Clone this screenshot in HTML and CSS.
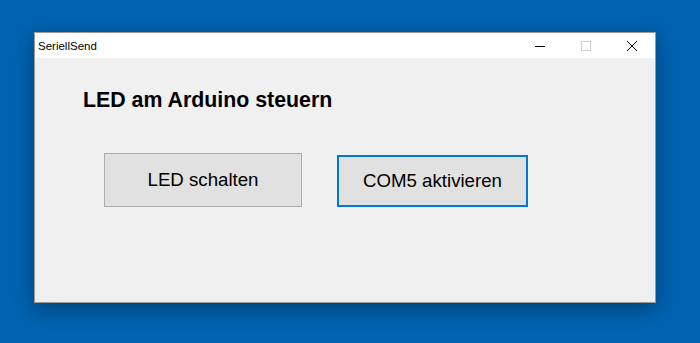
FILE: index.html
```html
<!DOCTYPE html>
<html lang="de">
<head>
    <meta charset="UTF-8">
    <title>SeriellSend</title>
    <link rel="stylesheet" href="styles.css">
</head>
<body>
    <div class="window">
        <div class="titlebar">
            <span class="title">SeriellSend</span>
            <div class="controls">
                <div class="ctrl">
                    <svg width="10" height="10" viewBox="0 0 10 10"><path d="M0 5.5H10" stroke="#000" stroke-width="1"/></svg>
                </div>
                <div class="ctrl">
                    <svg width="10" height="10" viewBox="0 0 10 10"><rect x="0.5" y="0.5" width="9" height="9" fill="none" stroke="#cccccc" stroke-width="1"/></svg>
                </div>
                <div class="ctrl">
                    <svg width="10" height="10" viewBox="0 0 10 10"><path d="M0 0L10 10M10 0L0 10" stroke="#000" stroke-width="1"/></svg>
                </div>
            </div>
        </div>
        <div class="content">
            <h1>LED am Arduino steuern</h1>
            <div class="buttons">
                <button class="button">LED schalten</button>
                <button class="button focused">COM5 aktivieren</button>
            </div>
        </div>
    </div>
</body>
</html>
```

FILE: styles.css
```css
body {
    margin: 0;
    background-color: #0063b1;
    font-family: "Liberation Sans", Arial, sans-serif;
    height: 343px;
    overflow: hidden;
}
.window {
    margin: 32px 0 0 34px;
    width: 620px;
    height: 269px;
    border: 1px solid #9a9a9a;
    background-color: #f0f0f0;
    box-shadow: 0 6px 22px rgba(0, 0, 0, 0.35);
}
.titlebar {
    height: 25px;
    background-color: #fff;
    display: flex;
    align-items: center;
    justify-content: space-between;
}
.title {
    font-size: 11.5px;
    padding-left: 3px;
    color: #000;
}
.controls {
    display: flex;
    height: 100%;
}
.ctrl {
    width: 46px;
    display: flex;
    align-items: center;
    justify-content: center;
}
.ctrl svg {
    display: block;
}
.content {
    padding: 30px 0 0 48px;
}
h1 {
    margin: 0;
    font-size: 21.33px;
    line-height: 24px;
    font-weight: bold;
    color: #000;
}
.buttons {
    display: flex;
    align-items: flex-end;
    gap: 35px;
    margin: 41px 0 0 21px;
}
.button {
    font-family: "Liberation Sans", Arial, sans-serif;
    font-size: 18.67px;
    color: #000;
    background-color: #e1e1e1;
    border: 1px solid #adadad;
    width: 198px;
    height: 54px;
    padding: 0;
}
.button.focused {
    border: 2px solid #0078d7;
    width: 191px;
    height: 52px;
}
```
